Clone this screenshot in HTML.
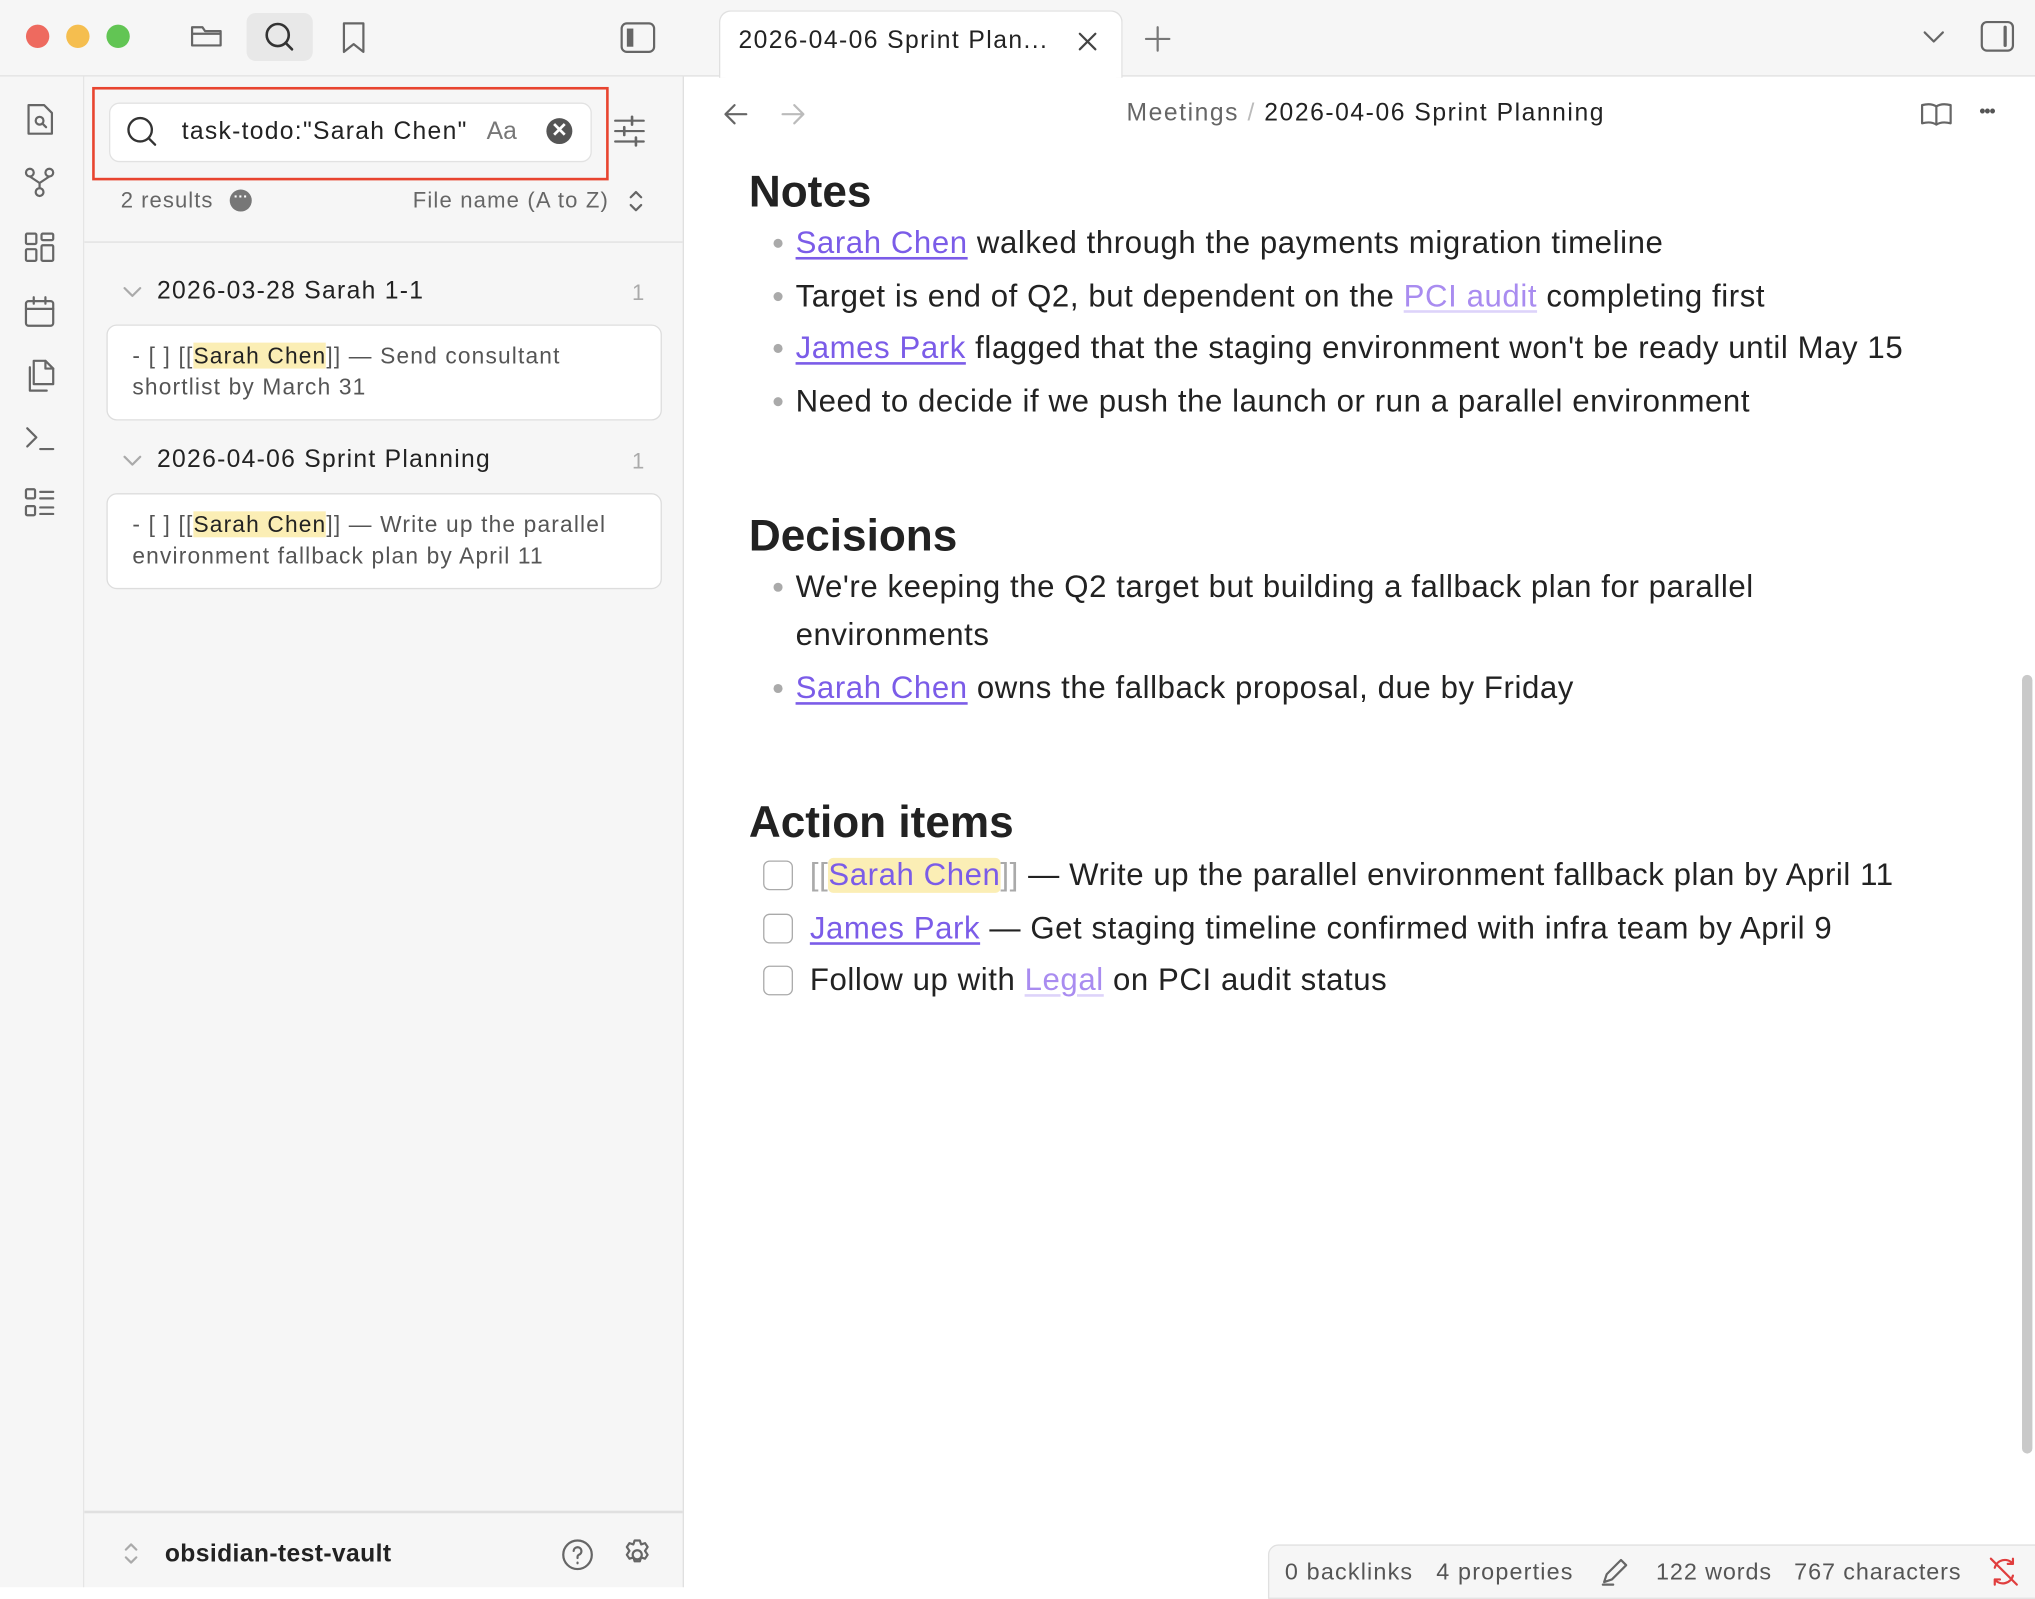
<!DOCTYPE html>
<html><head><meta charset="utf-8"><style>
html,body{margin:0;padding:0;width:2035px;height:1587px;overflow:hidden;background:#fff}
#w{position:absolute;left:0;top:0;width:1568px;height:1223px;transform:scale(1.29783);transform-origin:0 0;font-family:"Liberation Sans",sans-serif;color:#222}
.a{position:absolute}
.t{position:absolute;white-space:nowrap;line-height:1}
.b{letter-spacing:0.45px}
svg{position:absolute;overflow:visible}
.ic{fill:none;stroke:#666;stroke-width:1.7;stroke-linecap:round;stroke-linejoin:round}
.lk{color:#7b5ce8;text-decoration:underline;text-decoration-color:#7b5ce8;text-underline-offset:3px}
.ul{color:#a98cf0;text-decoration:underline;text-decoration-color:#ddd3fa;text-underline-offset:3px}
.hl{background:#fbeeb5}
.bul{position:absolute;width:7px;height:7px;border-radius:50%;background:#aaa}
.cb{position:absolute;width:21px;height:21px;border:1.5px solid #aaa;border-radius:5px;background:#fff}
.sc{font-size:17.5px;letter-spacing:0.9px;color:#555}
</style></head><body><div id="w">
<div class="a" style="left:0;top:0;width:527px;height:58px;background:#f6f6f6;border-bottom:1px solid #e0e0e0"></div>
<div class="a" style="left:20px;top:19px;width:18px;height:18px;border-radius:50%;background:#ee6a5f"></div>
<div class="a" style="left:51px;top:19px;width:18px;height:18px;border-radius:50%;background:#f5be4f"></div>
<div class="a" style="left:82px;top:19px;width:18px;height:18px;border-radius:50%;background:#62c554"></div>
<svg style="left:146px;top:16px" width="26" height="24"><path class="ic" d="M2 5v14h22V8H12l-2-3z M2 10h22"/></svg>
<div class="a" style="left:190px;top:10px;width:51px;height:37px;border-radius:7px;background:#e8e8e8"></div>
<svg style="left:203px;top:16px" width="26" height="26"><circle class="ic" cx="11" cy="11" r="8.5" style="stroke:#333;stroke-width:2"/><path class="ic" style="stroke:#333;stroke-width:2" d="M17 17l5 5"/></svg>
<svg style="left:263px;top:16px" width="20" height="26"><path class="ic" d="M2 2h15v22l-7.5-6L2 24z"/></svg>
<svg style="left:478px;top:17px" width="27" height="24"><rect class="ic" x="1" y="1" width="25" height="22" rx="4"/><rect x="5" y="5" width="5" height="14" fill="#666"/></svg>
<div class="a" style="left:0;top:59px;width:64px;height:1164px;background:#f6f6f6;border-right:1px solid #e4e4e4"></div>
<svg style="left:20px;top:79px" width="22" height="26"><path class="ic" d="M2 2h12l6 6v16H2z"/><circle class="ic" cx="10.5" cy="14" r="3"/><path class="ic" d="M13 16.5l2.5 2.5"/></svg>
<svg style="left:19px;top:129px" width="24" height="24"><circle class="ic" cx="4" cy="4" r="3"/><circle class="ic" cx="19" cy="4" r="3"/><circle class="ic" cx="11.5" cy="19" r="3"/><path class="ic" d="M4 7l7.5 5 7.5-5M11.5 12v4"/></svg>
<svg style="left:19px;top:179px" width="24" height="24"><rect class="ic" x="1" y="1" width="8" height="8" rx="1"/><rect class="ic" x="13" y="1" width="9" height="5" rx="1"/><rect class="ic" x="13" y="10" width="9" height="12" rx="1"/><rect class="ic" x="1" y="13" width="8" height="9" rx="1"/></svg>
<svg style="left:19px;top:228px" width="24" height="24"><rect class="ic" x="1" y="4" width="21" height="19" rx="2"/><path class="ic" d="M1 10h21M7 1v5M16 1v5"/></svg>
<svg style="left:19px;top:277px" width="24" height="26"><path class="ic" d="M7 1h9l6 6v12H7z M4 6v18h13"/><path class="ic" d="M16 1v6h6"/></svg>
<svg style="left:19px;top:328px" width="24" height="20"><path class="ic" d="M2 2l7 7-7 7M12 18h10"/></svg>
<svg style="left:19px;top:376px" width="24" height="24"><rect class="ic" x="1" y="1" width="7" height="7" rx="1"/><rect class="ic" x="1" y="14" width="7" height="7" rx="1"/><path class="ic" d="M12 3h10M12 8h10M12 15h10M12 20h10"/></svg>
<div class="a" style="left:65px;top:59px;width:461px;height:1164px;background:#f6f6f6;border-right:1px solid #e0e0e0"></div>
<div class="a" style="left:71px;top:67px;width:394px;height:68px;border:2.5px solid #e8442f"></div>
<div class="a" style="left:84px;top:79px;width:370px;height:44px;background:#fff;border:1px solid #e2e2e2;border-radius:8px"></div>
<svg style="left:97px;top:89px" width="26" height="26"><circle class="ic" cx="11" cy="11" r="9" style="stroke:#333;stroke-width:1.8"/><path class="ic" style="stroke:#333;stroke-width:1.8" d="M17.5 17.5l5 5"/></svg>
<div class="t" style="left:140px;top:92px;font-size:19px;color:#222;letter-spacing:1px">task-todo:"Sarah Chen"</div>
<div class="t" style="left:375px;top:92px;font-size:19px;color:#777">Aa</div>
<div class="a" style="left:421px;top:91px;width:20px;height:20px;border-radius:50%;background:#555;color:#fff;font-size:15px;line-height:20px;text-align:center;font-weight:bold">✕</div>
<svg style="left:472px;top:88px" width="26" height="26"><path class="ic" d="M2 5h22M2 13h22M2 21h22" /><path class="ic" d="M15 2v6M9 10v6M18 18v6" style="stroke-width:2"/></svg>
<div class="t" style="left:93px;top:146px;font-size:17px;color:#666;letter-spacing:0.8px">2 results</div>
<div class="a" style="left:177px;top:146px;width:17px;height:17px;border-radius:50%;background:#777;color:#fff;font-size:11px;line-height:12px;text-align:center;font-weight:bold">···</div>
<div class="t" style="left:318px;top:146px;font-size:17px;color:#666;letter-spacing:0.9px">File name (A to Z)</div>
<svg style="left:484px;top:146px" width="12" height="18"><path class="ic" d="M2 6l4-4 4 4M2 12l4 4 4-4"/></svg>
<div class="a" style="left:65px;top:186px;width:461px;height:1px;background:#e0e0e0"></div>
<svg style="left:94px;top:220px" width="16" height="10"><path class="ic" d="M2 2l6 6 6-6" style="stroke:#aaa"/></svg>
<div class="t" style="left:121px;top:215px;font-size:19px;color:#222;letter-spacing:1px">2026-03-28 Sarah 1-1</div>
<div class="t" style="left:487px;top:217px;font-size:17px;color:#aaa">1</div>
<div class="a" style="left:82px;top:250px;width:426px;height:72px;background:#fff;border:1px solid #ddd;border-radius:8px"></div>
<div class="t sc" style="left:102px;top:266px">- [ ] [[<span class="hl" style="color:#222">Sarah Chen</span>]] — Send consultant</div>
<div class="t sc" style="left:102px;top:290px">shortlist by March 31</div>
<svg style="left:94px;top:350px" width="16" height="10"><path class="ic" d="M2 2l6 6 6-6" style="stroke:#aaa"/></svg>
<div class="t" style="left:121px;top:345px;font-size:19px;color:#222;letter-spacing:1px">2026-04-06 Sprint Planning</div>
<div class="t" style="left:487px;top:347px;font-size:17px;color:#aaa">1</div>
<div class="a" style="left:82px;top:380px;width:426px;height:72px;background:#fff;border:1px solid #ddd;border-radius:8px"></div>
<div class="t sc" style="left:102px;top:396px">- [ ] [[<span class="hl" style="color:#222">Sarah Chen</span>]] — Write up the parallel</div>
<div class="t sc" style="left:102px;top:420px">environment fallback plan by April 11</div>
<div class="a" style="left:65px;top:1164px;width:461px;height:2px;background:#e0e0e0"></div>
<svg style="left:95px;top:1188px" width="12" height="18"><path class="ic" d="M2 6l4-4 4 4M2 12l4 4 4-4" style="stroke:#aaa"/></svg>
<div class="t" style="left:127px;top:1188px;font-size:19px;font-weight:bold;color:#222;letter-spacing:0.3px">obsidian-test-vault</div>
<svg style="left:433px;top:1186px" width="24" height="24"><circle class="ic" cx="12" cy="12" r="11"/><path class="ic" d="M9 9a3 3 0 1 1 4 3c-1 .5-1 1-1 2.5M12 18v.5"/></svg>
<svg style="left:479px;top:1186px" width="24" height="24"><circle class="ic" cx="12" cy="12" r="3.5"/><path class="ic" d="M10 1h4l1 3 3-1 2 3-2 3 0 0 2 3-2 3-3-1-1 3h-4l-1-3-3 1-2-3 2-3-2-3 2-3 3 1z"/></svg>
<div class="a" style="left:527px;top:0;width:1041px;height:58px;background:#f6f6f6;border-bottom:1px solid #e0e0e0"></div>
<div class="a" style="left:554px;top:8px;width:309px;height:51px;background:#fff;border:1px solid #e0e0e0;border-bottom:none;border-radius:9px 9px 0 0"></div>
<div class="t" style="left:569px;top:22px;font-size:19px;color:#222;letter-spacing:1.1px">2026-04-06 Sprint Plan...</div>
<svg style="left:831px;top:25px" width="14" height="14"><path class="ic" d="M1 1l12 12M13 1L1 13" style="stroke:#444"/></svg>
<svg style="left:882px;top:20px" width="20" height="20"><path class="ic" d="M10 1v18M1 10h18" style="stroke:#777"/></svg>
<svg style="left:1482px;top:24px" width="16" height="10"><path class="ic" d="M1 1l7 7 7-7"/></svg>
<svg style="left:1526px;top:16px" width="26" height="24"><rect class="ic" x="1" y="1" width="24" height="22" rx="4"/><path class="ic" d="M19 5v14" style="stroke-width:2.5"/></svg>
<svg style="left:557px;top:79px" width="20" height="18"><path class="ic" d="M18 9H2M9 2L2 9l7 7"/></svg>
<svg style="left:601px;top:79px" width="20" height="18"><path class="ic" d="M2 9h16M11 2l7 7-7 7" style="stroke:#bbb"/></svg>
<div class="t" style="left:868px;top:78px;font-size:19px;color:#666;letter-spacing:1.2px">Meetings <span style="color:#bbb">/</span> <span style="color:#222">2026-04-06 Sprint Planning</span></div>
<svg style="left:1480px;top:78px" width="24" height="20"><path class="ic" d="M12 4C9 2 5 2 1 3v14c4-1 8-1 11 1 3-2 7-2 11-1V3c-4-1-8-1-11 1zM12 4v14"/></svg>
<div class="t" style="left:1525px;top:78px;font-size:14px;color:#555;letter-spacing:-1px">•••</div>
<div class="a" style="left:1558px;top:520px;width:8px;height:600px;border-radius:4px;background:#c9c9c9"></div>
<div class="t" style="left:577px;top:131px;font-size:34px;font-weight:bold;color:#222">Notes</div>
<div class="bul" style="left:596px;top:184px"></div>
<div class="t b" style="left:613px;top:176px;font-size:24px"><span class="lk">Sarah Chen</span> walked through the payments migration timeline</div>
<div class="bul" style="left:596px;top:225px"></div>
<div class="t b" style="left:613px;top:217px;font-size:24px">Target is end of Q2, but dependent on the <span class="ul">PCI audit</span> completing first</div>
<div class="bul" style="left:596px;top:265px"></div>
<div class="t b" style="left:613px;top:257px;font-size:24px"><span class="lk">James Park</span> flagged that the staging environment won't be ready until May 15</div>
<div class="bul" style="left:596px;top:306px"></div>
<div class="t b" style="left:613px;top:298px;font-size:24px">Need to decide if we push the launch or run a parallel environment</div>
<div class="t" style="left:577px;top:396px;font-size:34px;font-weight:bold;color:#222">Decisions</div>
<div class="bul" style="left:596px;top:449px"></div>
<div class="t b" style="left:613px;top:441px;font-size:24px">We're keeping the Q2 target but building a fallback plan for parallel</div>
<div class="t b" style="left:613px;top:478px;font-size:24px">environments</div>
<div class="bul" style="left:596px;top:527px"></div>
<div class="t b" style="left:613px;top:519px;font-size:24px"><span class="lk">Sarah Chen</span> owns the fallback proposal, due by Friday</div>
<div class="t" style="left:577px;top:617px;font-size:34px;font-weight:bold;color:#222">Action items</div>
<div class="cb" style="left:588px;top:663px"></div>
<div class="t b" style="left:624px;top:663px;font-size:24px"><span style="color:#aaa">[[</span><span class="hl" style="color:#7b5ce8;border-radius:4px">Sarah Chen</span><span style="color:#aaa">]]</span> — Write up the parallel environment fallback plan by April 11</div>
<div class="cb" style="left:588px;top:704px"></div>
<div class="t b" style="left:624px;top:704px;font-size:24px"><span class="lk">James Park</span> — Get staging timeline confirmed with infra team by April 9</div>
<div class="cb" style="left:588px;top:744px"></div>
<div class="t b" style="left:624px;top:744px;font-size:24px">Follow up with <span class="ul">Legal</span> on PCI audit status</div>
<div class="a" style="left:977px;top:1190px;width:600px;height:40px;background:#f6f6f6;border:1px solid #e0e0e0;border-radius:8px 0 0 0"></div>
<div class="t" style="left:990px;top:1202px;font-size:18px;color:#555;letter-spacing:0.9px">0 backlinks&nbsp;&nbsp;&nbsp;4 properties</div>
<svg style="left:1233px;top:1200px" width="22" height="22"><path class="ic" d="M3 19l2-6L16 2l4 4L9 17zM2 21h8"/></svg>
<div class="t" style="left:1276px;top:1202px;font-size:18px;color:#555;letter-spacing:0.7px">122 words&nbsp;&nbsp;&nbsp;767 characters</div>
<svg style="left:1533px;top:1200px" width="22" height="22"><path class="ic" d="M4 8a8 8 0 0 1 14-3M18 14a8 8 0 0 1-14 3M1 1l20 20M18 1v4h-4M4 21v-4h4" style="stroke:#e03e3e"/></svg>
</div></body></html>
